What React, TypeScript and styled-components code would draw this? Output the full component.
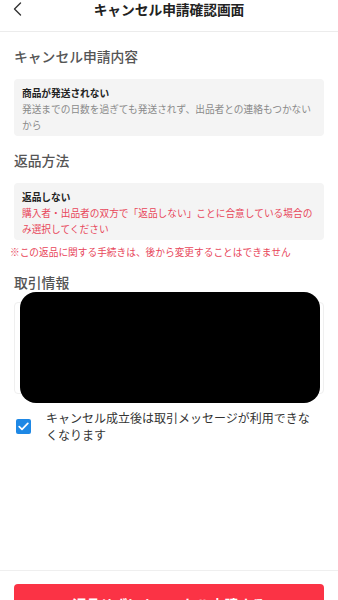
import React from "react";
import styled, { createGlobalStyle } from "styled-components";

const GlobalStyle = createGlobalStyle`
  html, body {
    margin: 0;
    padding: 0;
    background: #ffffff;
    font-family: "Noto Sans CJK JP", "Noto Sans", sans-serif;
    color: #222;
    overflow: hidden;
  }
  * { box-sizing: border-box; }
`;

const Page = styled.div`
  width: 100%;
  height: 100vh;
  display: flex;
  flex-direction: column;
  background: #fff;
`;

const Header = styled.header`
  position: relative;
  height: 32px;
  border-bottom: 1px solid #ececec;
  display: flex;
  justify-content: center;
  align-items: flex-start;
`;

const BackButton = styled.button`
  position: absolute;
  left: 10px;
  top: 1px;
  width: 14px;
  height: 15px;
  padding: 0;
  border: none;
  background: transparent;
  display: flex;
  align-items: center;
  justify-content: center;
`;

const HeaderTitle = styled.h1`
  margin: 0;
  font-size: 13.8px;
  line-height: 19px;
  font-weight: 700;
  color: #222;
  letter-spacing: -0.1px;
`;

const SectionTitle = styled.h2`
  margin: 0;
  padding: 14px 14px 13px;
  font-size: 13.8px;
  line-height: 20px;
  font-weight: 500;
  color: #555;
`;

const Card = styled.div`
  margin: 0 14px;
  padding: 6px 8px 3px;
  background: #f4f4f4;
  border-radius: 4px;
`;

const CardTitle = styled.div`
  font-size: 9.7px;
  line-height: 16px;
  font-weight: 700;
  color: #222;
`;

const CardText = styled.div<{ $tone?: "muted" | "alert" }>`
  font-size: 9.7px;
  line-height: 16px;
  font-weight: 400;
  color: ${(p) => (p.$tone === "alert" ? "#e8465a" : "#8a8a8a")};
`;

const Note = styled.p`
  margin: 4px 0 0;
  padding: 0 10px;
  font-size: 9.7px;
  line-height: 16px;
  color: #e8465a;
`;

const TradeTitle = styled(SectionTitle)`
  padding: 12px 14px 0;
`;

const TradeArea = styled.div`
  position: relative;
  height: 111px;
`;

const TradeCard = styled.div`
  margin: 10px 14px 0;
  height: 92px;
  border: 1px solid #efefef;
  border-radius: 4px;
`;

const Redaction = styled.div`
  position: absolute;
  top: 0;
  bottom: 0;
  left: 20px;
  right: 18px;
  background: #000;
  border-radius: 16px;
`;

const ConfirmRow = styled.label`
  display: flex;
  align-items: center;
  gap: 15px;
  padding: 6px 22px 0 16px;
`;

const CheckBox = styled.span`
  flex: 0 0 15px;
  width: 15px;
  height: 15px;
  border-radius: 2px;
  background: #1e88e5;
  display: flex;
  align-items: center;
  justify-content: center;
`;

const ConfirmText = styled.span`
  font-size: 12px;
  line-height: 17px;
  color: #333;
`;

const Footer = styled.footer`
  position: fixed;
  left: 0;
  right: 0;
  bottom: -42px;
  height: 72px;
  border-top: 1px solid #efefef;
  background: #fff;
  padding: 13px 14px 0;
`;

const PrimaryButton = styled.button`
  width: 100%;
  height: 40px;
  border: none;
  border-radius: 4px;
  background: #fb3345;
  color: #fff;
  font-family: "Noto Sans CJK JP", sans-serif;
  font-size: 13.8px;
  font-weight: 700;
`;

export default function App() {
  return (
    <>
      <GlobalStyle />
      <Page>
        <Header>
          <BackButton aria-label="戻る">
            <svg width="9" height="14" viewBox="0 0 9 14">
              <polyline
                points="7.5,1 1.5,7 7.5,13"
                fill="none"
                stroke="#333"
                strokeWidth="1.4"
                strokeLinecap="round"
                strokeLinejoin="round"
              />
            </svg>
          </BackButton>
          <HeaderTitle>キャンセル申請確認画面</HeaderTitle>
        </Header>

        <SectionTitle>キャンセル申請内容</SectionTitle>
        <Card>
          <CardTitle>商品が発送されない</CardTitle>
          <CardText $tone="muted">
            発送までの日数を過ぎても発送されず、出品者との連絡もつかないから
          </CardText>
        </Card>

        <SectionTitle>返品方法</SectionTitle>
        <Card>
          <CardTitle>返品しない</CardTitle>
          <CardText $tone="alert">
            購入者・出品者の双方で「返品しない」ことに合意している場合のみ選択してください
          </CardText>
        </Card>
        <Note>※この返品に関する手続きは、後から変更することはできません</Note>

        <TradeTitle>取引情報</TradeTitle>
        <TradeArea>
          <TradeCard />
          <Redaction />
        </TradeArea>

        <ConfirmRow>
          <CheckBox>
            <svg width="11" height="9" viewBox="0 0 11 9">
              <polyline
                points="1.2,4.6 4,7.3 9.8,1.4"
                fill="none"
                stroke="#fff"
                strokeWidth="1.7"
                strokeLinecap="round"
                strokeLinejoin="round"
              />
            </svg>
          </CheckBox>
          <ConfirmText>キャンセル成立後は取引メッセージが利用できなくなります</ConfirmText>
        </ConfirmRow>

        <Footer>
          <PrimaryButton>返品せずにキャンセル申請する</PrimaryButton>
        </Footer>
      </Page>
    </>
  );
}
